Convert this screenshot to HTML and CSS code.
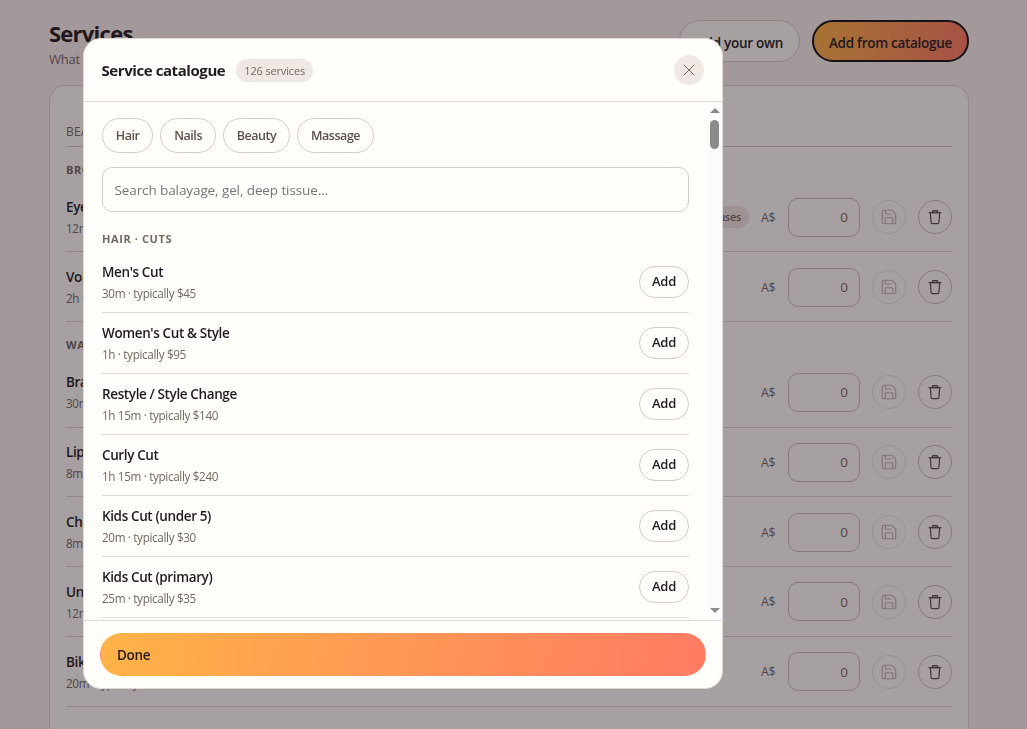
FILE: index.html
```html
<!DOCTYPE html>
<html lang="en">
<head>
    <meta charset="UTF-8">
    <meta name="viewport" content="width=device-width, initial-scale=1.0">
    <title>Services</title>
    <link rel="stylesheet" href="styles.css">
</head>
<body>

    <!-- Shared icons -->
    <svg class="sprite">
        <symbol id="icon-save" viewBox="0 0 24 24">
            <path d="M15.2 3a2 2 0 0 1 1.4.6l3.8 3.8a2 2 0 0 1 .6 1.4V19a2 2 0 0 1-2 2H5a2 2 0 0 1-2-2V5a2 2 0 0 1 2-2z"/>
            <path d="M17 21v-7a1 1 0 0 0-1-1H8a1 1 0 0 0-1 1v7"/>
            <path d="M7 3v4a1 1 0 0 0 1 1h7"/>
        </symbol>
        <symbol id="icon-trash" viewBox="0 0 24 24">
            <path d="M3.5 6.2h17"/>
            <path d="M18.2 6.2l-.9 12.8a2 2 0 0 1-2 1.9H8.7a2 2 0 0 1-2-1.9L5.8 6.2"/>
            <path d="M8.5 6.2V4.5a1.2 1.2 0 0 1 1.2-1.2h4.6a1.2 1.2 0 0 1 1.2 1.2v1.7z" fill="currentColor" fill-opacity=".5"/>
        </symbol>
    </svg>

    <main class="page">
        <header class="page-header">
            <div>
                <h1>Services</h1>
                <p class="subtitle">What you offer</p>
            </div>
            <div class="actions">
                <button class="btn">Add your own</button>
                <button class="btn btn-primary focused">Add from catalogue</button>
            </div>
        </header>

        <section class="card">
            <h2 class="category">BEAUTY</h2>
            <h3 class="group">BROWS</h3>
            <div id="brows"></div>
            <h3 class="group">WAXING</h3>
            <div id="waxing"></div>
        </section>
    </main>

    <div class="overlay">
        <div class="modal" role="dialog">
            <header class="modal-header">
                <h2>Service catalogue</h2>
                <span class="badge">126 services</span>
                <button class="close" aria-label="Close">
                    <svg viewBox="0 0 12 12"><path d="M.7.7l10.6 10.6M11.3.7L.7 11.3"/></svg>
                </button>
            </header>
            <div class="modal-body">
                <div class="modal-content">
                    <div class="chips">
                        <button class="chip">Hair</button>
                        <button class="chip">Nails</button>
                        <button class="chip">Beauty</button>
                        <button class="chip">Massage</button>
                    </div>
                    <input class="search" type="text" placeholder="Search balayage, gel, deep tissue...">
                    <h3 class="list-title">HAIR · CUTS</h3>
                    <div id="catalogue"></div>
                </div>
                <div class="scrollbar">
                    <span class="arrow-up"></span>
                    <span class="thumb"></span>
                    <span class="arrow-down"></span>
                </div>
            </div>
            <footer class="modal-footer">
                <button class="btn btn-primary done">Done</button>
            </footer>
        </div>
    </div>

    <script>
        const brows = [
            ['Eyebrow Shape', '12m · typically $25', '14 uses'],
            ['Volume Lashes', '2h · typically $180']
        ];
        const waxing = [
            ['Brazilian', '30m · typically $65'],
            ['Lip Wax', '8m · typically $15'],
            ['Chin Wax', '8m · typically $15'],
            ['Underarm', '12m · typically $25'],
            ['Bikini', '20m · typically $35']
        ];
        const catalogue = [
            ["Men's Cut", '30m · typically $45'],
            ["Women's Cut &amp; Style", '1h · typically $95'],
            ['Restyle / Style Change', '1h 15m · typically $140'],
            ['Curly Cut', '1h 15m · typically $240'],
            ['Kids Cut (under 5)', '20m · typically $30'],
            ['Kids Cut (primary)', '25m · typically $35']
        ];

        function serviceRow([name, meta, tag]) {
            return `<div class="service">
                <div class="info"><strong>${name}</strong><span>${meta}</span></div>
                ${tag ? `<span class="tag">${tag}</span>` : ''}
                <span class="currency">A$</span>
                <input class="price" type="text" value="0">
                <button class="icon-btn" disabled><svg><use href="#icon-save"/></svg></button>
                <button class="icon-btn"><svg><use href="#icon-trash"/></svg></button>
            </div>`;
        }

        function catalogueRow([name, meta]) {
            return `<div class="item">
                <div class="info"><strong>${name}</strong><span>${meta}</span></div>
                <button class="add">Add</button>
            </div>`;
        }

        document.getElementById('brows').innerHTML = brows.map(serviceRow).join('');
        document.getElementById('waxing').innerHTML = waxing.map(serviceRow).join('');
        document.getElementById('catalogue').innerHTML = catalogue.map(catalogueRow).join('');
    </script>
</body>
</html>
```
FILE: styles.css
```css
* {
    box-sizing: border-box;
}
body {
    margin: 0;
    height: 729px;
    overflow: hidden;
    background: #f9f0f1;
    color: #231a22;
    font-family: 'Segoe UI', 'Open Sans', 'Noto Sans', sans-serif;
    font-size: 14px;
}
h1, h2, h3, p {
    margin: 0;
}
button, input {
    font: inherit;
    color: inherit;
}
.sprite {
    display: none;
}

/* Page behind the dialog */
.page {
    width: 920px;
    margin-left: 49px;
    padding-top: 20px;
}
.page-header {
    display: flex;
    justify-content: space-between;
    height: 65px;
}
h1 {
    font-size: 22px;
    line-height: 27px;
    font-weight: 700;
    letter-spacing: -.75px;
}
.subtitle {
    color: #75675f;
    font-size: 13px;
    line-height: 24px;
    letter-spacing: -.2px;
}
.actions {
    display: flex;
    gap: 12px;
    height: 42px;
}
.btn {
    padding: 0 16px;
    border: 1px solid #d9cbc3;
    border-radius: 21px;
    background: #fffefb;
    font-size: 13.5px;
    font-weight: 600;
    letter-spacing: -.28px;
    white-space: nowrap;
}
.actions .btn {
    width: 121px;
    padding: 3px 0 0;
}
.btn-primary {
    border-color: transparent;
    background: linear-gradient(100deg, #ffb347, #ff7b63);
}
.actions .focused {
    width: 157px;
    border: 2px solid #101018;
}
.card {
    height: 644px;
    padding: 34px 16px 0;
    border: 1px solid #e0d3ce;
    border-bottom: 0;
    border-radius: 16px 16px 0 0;
    background: #fffefd;
}
.category {
    height: 27px;
    border-bottom: 1px solid #d9cbc3;
    color: #75675f;
    font-size: 12px;
    font-weight: 400;
    line-height: 23px;
    letter-spacing: .2px;
}
.group {
    height: 35px;
    padding-top: 15px;
    color: #75675f;
    font-size: 11px;
    font-weight: 700;
    line-height: 16px;
    letter-spacing: .6px;
}
div + .group {
    height: 36.2px;
}
.service {
    display: flex;
    align-items: center;
    height: 69.8px;
    padding-top: 2px;
    border-bottom: 1px solid #e0d3ce;
}
#waxing .service {
    padding-top: .6px;
}
.info {
    flex: 1;
    display: flex;
    flex-direction: column;
    padding-top: 1px;
    white-space: nowrap;
}
.info strong {
    font-size: 13.5px;
    font-weight: 600;
    line-height: 21px;
    letter-spacing: -.38px;
}
.info span {
    color: #75675f;
    font-size: 11.7px;
    line-height: 20px;
    letter-spacing: -.34px;
}
.service .info {
    padding-top: 2px;
}
.service .info span {
    line-height: 21px;
}
.tag {
    padding: 0 8px;
    margin-right: 12px;
    border-radius: 11px;
    background: #efe5e2;
    color: #75675f;
    font-size: 11px;
    font-weight: 600;
    line-height: 22px;
    letter-spacing: -.3px;
}
.currency {
    width: 14px;
    margin-right: 13px;
    color: #75675f;
    font-size: 12.5px;
    letter-spacing: -.4px;
}
.price {
    width: 72px;
    height: 39px;
    margin-right: 12px;
    padding: 0 11px;
    border: 1px solid #cdbdb4;
    border-radius: 10px;
    background: transparent;
    color: #75675f;
    font-size: 13.5px;
    text-align: right;
}
.icon-btn {
    display: flex;
    align-items: center;
    justify-content: center;
    width: 34px;
    height: 34px;
    padding: 0;
    border: 1px solid #cdbdb4;
    border-radius: 50%;
    background: transparent;
    color: #5d4b4b;
}
.icon-btn + .icon-btn {
    margin-left: 12px;
}
.icon-btn:disabled {
    opacity: .4;
}
.icon-btn svg {
    width: 18px;
    height: 18px;
    fill: none;
    stroke: currentColor;
    stroke-width: 1.6;
}

/* Dialog */
.overlay {
    position: fixed;
    inset: 0;
    padding: 38px 0 0 83px;
    background: rgba(34, 20, 26, .4);
}
.modal {
    display: flex;
    flex-direction: column;
    width: 640px;
    height: 651px;
    border: 1px solid #e2d8d0;
    border-radius: 18px;
    background: #fffefb;
    overflow: hidden;
}
.modal-header {
    display: flex;
    align-items: center;
    height: 63px;
    padding: 0 18px 0 17.5px;
    border-bottom: 1px solid #e2d8d0;
}
.modal-header h2 {
    font-size: 15px;
    font-weight: 700;
    letter-spacing: -.42px;
}
.badge {
    margin-left: 11px;
    padding: 0 8px;
    border-radius: 12px;
    background: #f0e8e4;
    color: #75675f;
    font-size: 11px;
    font-weight: 500;
    line-height: 23px;
    letter-spacing: -.15px;
}
.close {
    display: flex;
    align-items: center;
    justify-content: center;
    width: 30px;
    height: 30px;
    margin-left: auto;
    padding: 0;
    border: 0;
    border-radius: 50%;
    background: #f0e8e4;
}
.close svg {
    width: 12px;
    height: 12px;
    stroke: #75675f;
}
.modal-body {
    display: flex;
    height: 518px;
}
.modal-content {
    flex: 1;
    padding: 16px 18px 0;
}
.chips {
    display: flex;
    gap: 7px;
}
.chip {
    height: 35px;
    padding: 0 12.8px;
    border: 1px solid #d9cbc3;
    border-radius: 18px;
    background: transparent;
    color: #5f5049;
    font-size: 12.5px;
    font-weight: 600;
    letter-spacing: -.44px;
}
.search {
    display: block;
    width: 100%;
    height: 45px;
    margin-top: 14px;
    padding: 0 11.5px;
    border: 1px solid #d9cbc3;
    border-radius: 10px;
    background: transparent;
    font-size: 13.5px;
    letter-spacing: -.1px;
}
.search::placeholder {
    color: #757575;
}
.list-title {
    height: 40px;
    padding-top: 19px;
    color: #75675f;
    font-size: 11px;
    font-weight: 700;
    line-height: 16px;
    letter-spacing: .6px;
}
.item {
    display: flex;
    align-items: center;
    height: 61px;
    border-bottom: 1px solid #e2d8d0;
}
.add {
    width: 50px;
    height: 32px;
    padding: 0 0 2px;
    border: 1px solid #d9cbc3;
    border-radius: 16px;
    background: transparent;
    font-size: 13px;
    font-weight: 600;
    letter-spacing: -.25px;
}
.scrollbar {
    display: flex;
    flex-direction: column;
    align-items: center;
    width: 15px;
    padding: 6px 0 7px;
    background: #fcfcfe;
}
.thumb {
    width: 9px;
    height: 29px;
    margin-top: 7px;
    border-radius: 5px;
    background: #8b8b8b;
}
.arrow-up, .arrow-down {
    border: 5px solid transparent;
    border-top-width: 0;
    border-bottom: 5px solid #8b8b8b;
}
.arrow-down {
    margin-top: auto;
    border-top: 5px solid #8b8b8b;
    border-bottom-width: 0;
}
.modal-footer {
    display: flex;
    height: 68px;
    padding: 12px 16px;
    border-top: 1px solid #e2d8d0;
}
.done {
    flex: 1;
    height: 43px;
    border-radius: 22px;
    text-align: left;
}
```
